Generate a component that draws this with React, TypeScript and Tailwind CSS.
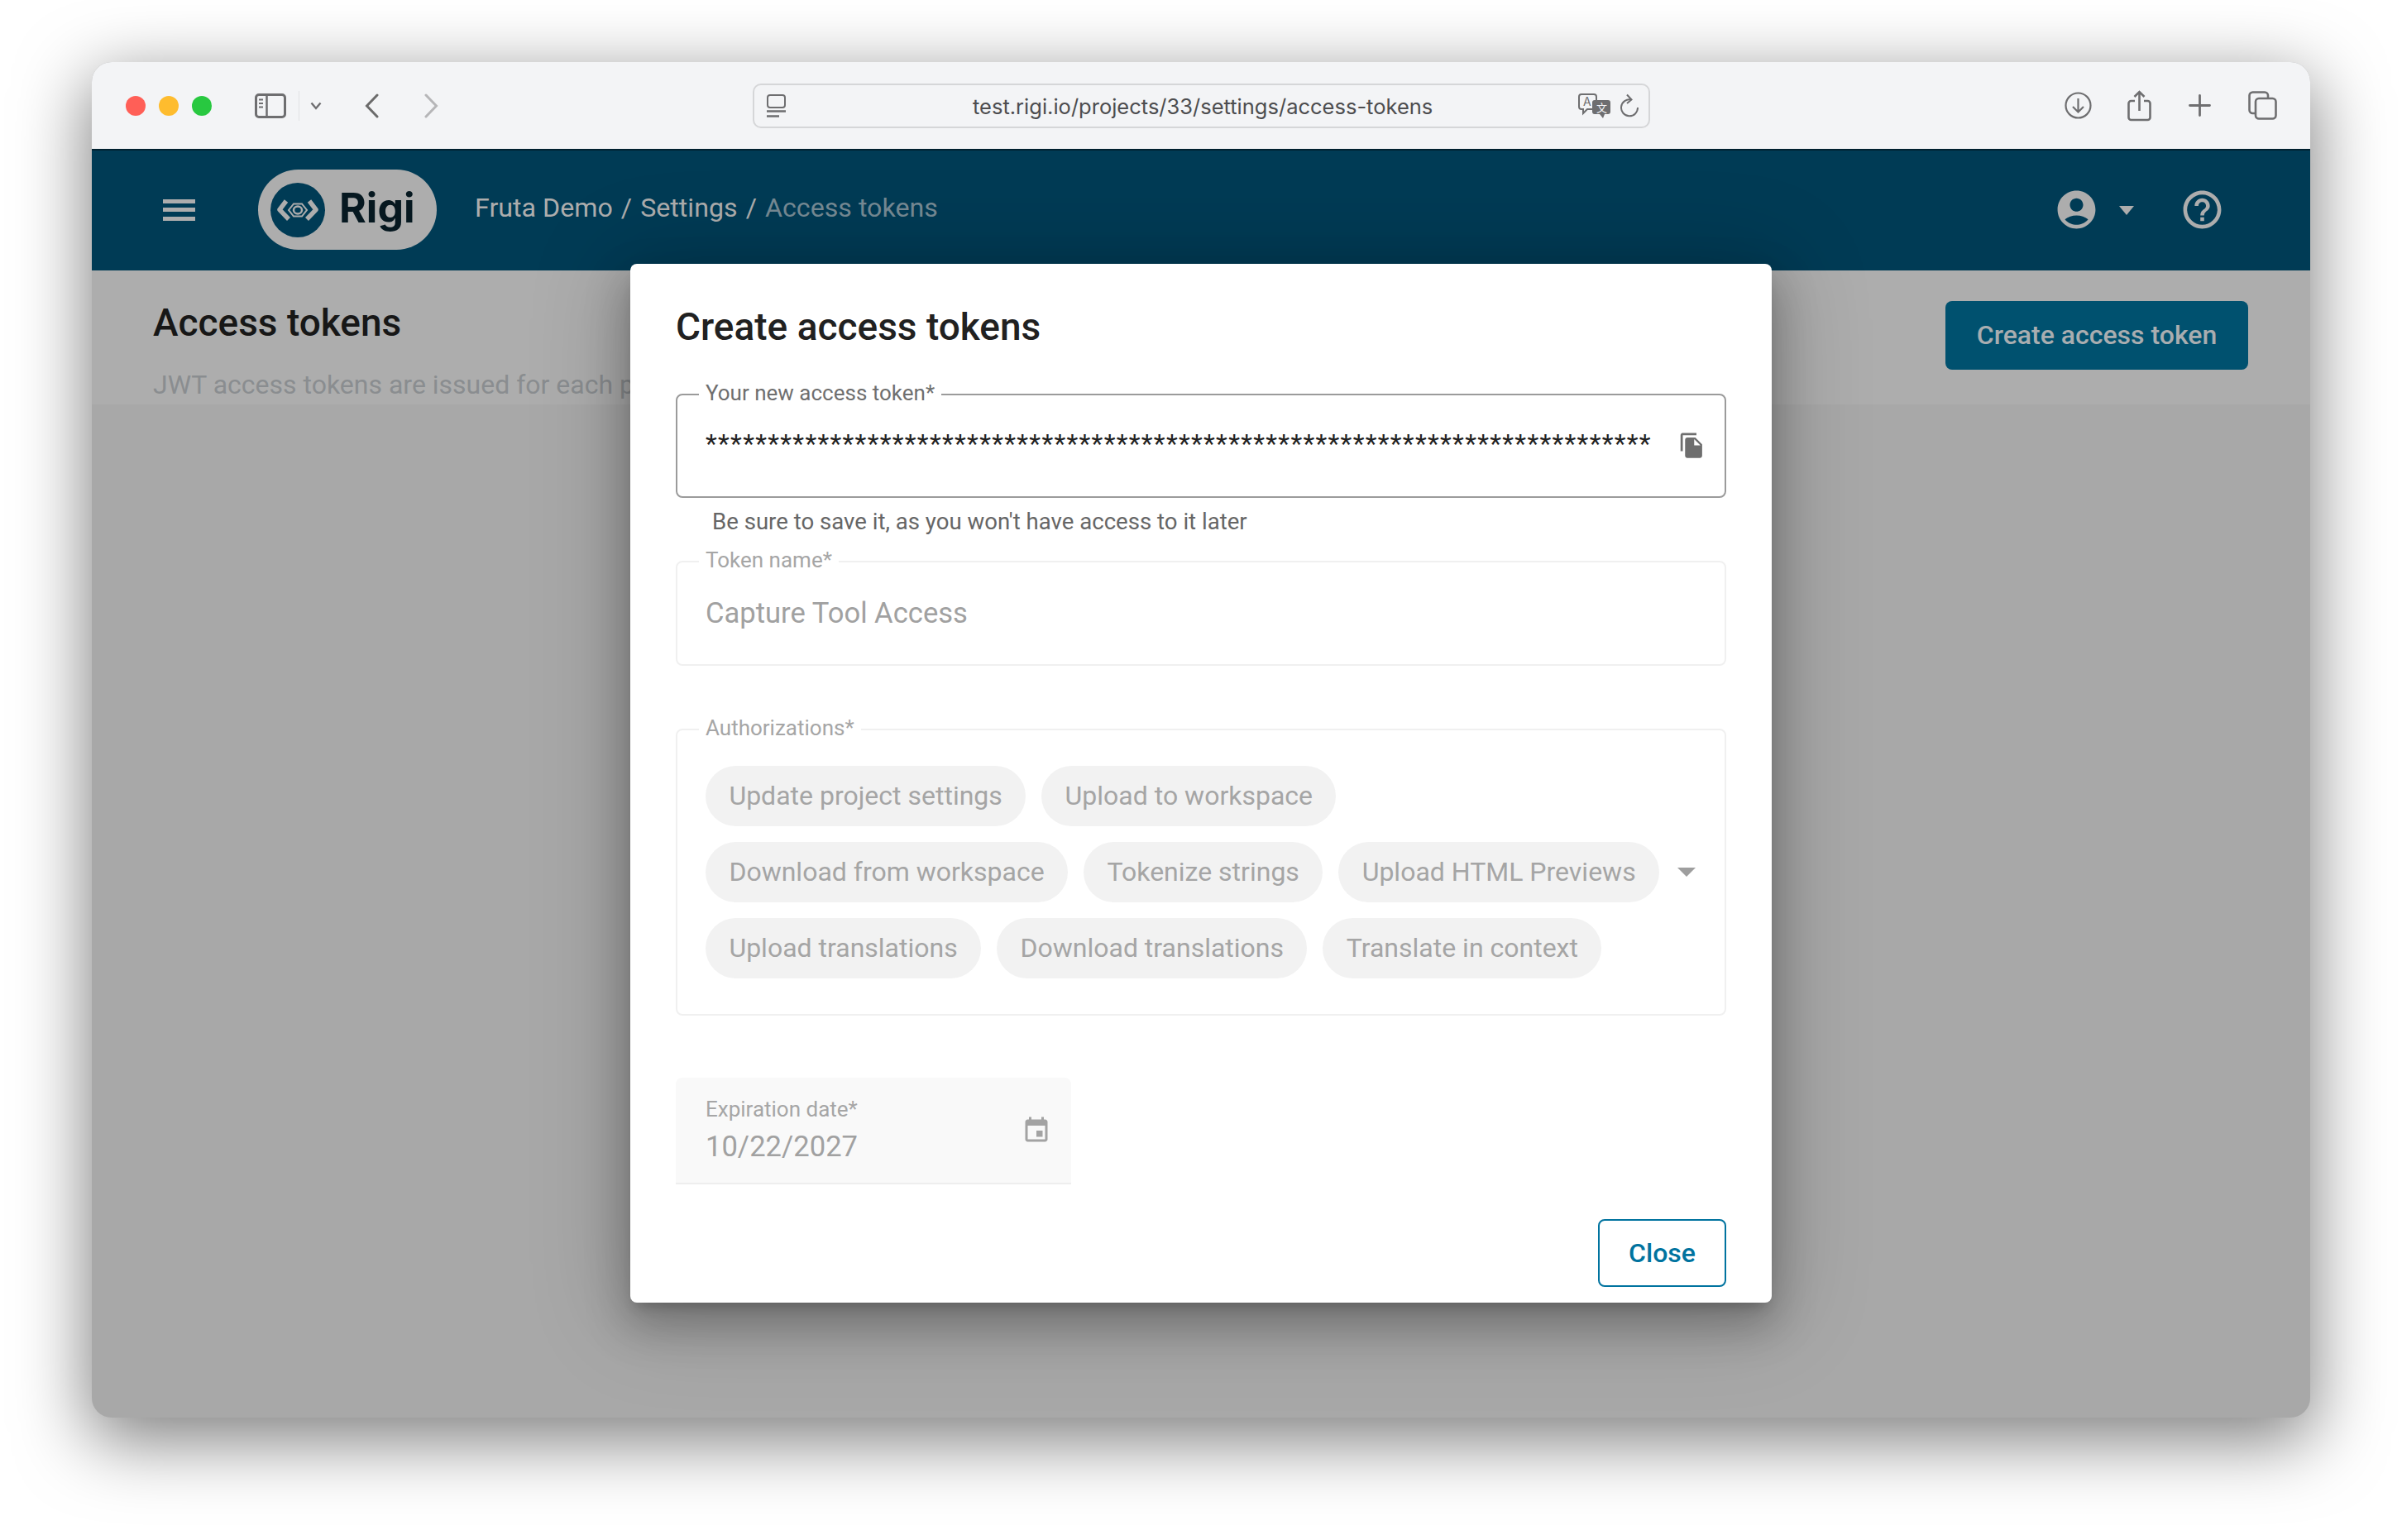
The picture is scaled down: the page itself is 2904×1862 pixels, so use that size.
const roboto = "font-['Roboto',sans-serif]";

function TrafficLight({ color }: { color: string }) {
  return <span className={`h-[24px] w-[24px] rounded-full ${color}`} />;
}

function RigiLogo() {
  return (
    <div className="ml-[76px] flex h-[97px] w-[216px] items-center rounded-full bg-[#adadad] pl-[15px]">
      <svg width="66" height="66" viewBox="0 0 66 66" fill="none">
        <circle cx="33" cy="33" r="33" fill="#003b55" />
        <path d="M19 22L11 32.5L22 44" stroke="#adadad" strokeWidth="5.5" strokeLinejoin="round" />
        <path d="M47 22L55 32.5L44 44" stroke="#adadad" strokeWidth="5.5" strokeLinejoin="round" />
        <path d="M22 33L28 25.5H38L44 33L38 40.5H28Z" stroke="#adadad" strokeWidth="2" />
        <ellipse cx="33" cy="33" rx="5" ry="4.5" stroke="#adadad" strokeWidth="2.5" />
      </svg>
      <span className="mb-[6px] ml-[17px] font-['Inter',sans-serif] text-[50px] leading-[56px] font-bold text-[#061820]">Rigi</span>
    </div>
  );
}

function Toolbar() {
  return (
    <div className="flex h-[105px] items-center bg-[#f3f4f6] pl-[41px]">
      <div className="flex gap-[16px]">
        <TrafficLight color="bg-[#ff5f57]" />
        <TrafficLight color="bg-[#febc2e]" />
        <TrafficLight color="bg-[#28c840]" />
      </div>
      <svg className="ml-[52px]" width="38" height="30" viewBox="0 0 38 30" fill="none" stroke="#6e6e70">
        <rect x="1.5" y="1.5" width="35" height="27" rx="3.5" strokeWidth="3" />
        <path d="M14.5 2V28" strokeWidth="2.5" />
        <path d="M5 7.5H10M5 12H10M5 16.5H10" strokeWidth="2" />
      </svg>
      <span className="ml-[15px] h-[36px] w-[1px] bg-[#e1e2e4]" />
      <svg className="ml-[13px]" width="14" height="10" viewBox="0 0 14 10" fill="none" stroke="#6e6e70" strokeWidth="2.4">
        <path d="M1.5 1.5L7 8L12.5 1.5" />
      </svg>
      <svg className="ml-[52px]" width="17" height="30" viewBox="0 0 17 30" fill="none" stroke="#6b6b6b" strokeWidth="3" strokeLinecap="round">
        <path d="M15 2L2.5 15L15 28" />
      </svg>
      <svg className="ml-[55px]" width="17" height="30" viewBox="0 0 17 30" fill="none" stroke="#b6b6b8" strokeWidth="3" strokeLinecap="round">
        <path d="M2 2L14.5 15L2 28" />
      </svg>

      <div className="ml-[380px] flex h-[54px] w-[1085px] items-center rounded-[10px] border-2 border-[#d5d6d8] pr-[11px] pl-[15px]">
        <svg width="24" height="28" viewBox="0 0 24 28" fill="none" stroke="#6e6e70">
          <rect x="1" y="1" width="21" height="15" rx="3" strokeWidth="2" />
          <path d="M0 20.5H23M0 26.5H15" strokeWidth="2.5" />
        </svg>
        <span className="mt-[2px] ml-[225px] font-['Inter',sans-serif] text-[25.5px] leading-[34px] text-[#4d4d4f]">test.rigi.io/projects/33/settings/access-tokens</span>
        <svg className="ml-auto" width="40" height="30" viewBox="0 0 40 30" fill="none">
          <path d="M4 1H19a3 3 0 0 1 3 3V16a3 3 0 0 1-3 3H11L6 24V19H4a3 3 0 0 1-3-3V4a3 3 0 0 1 3-3Z" stroke="#6e6e70" strokeWidth="2" />
          <text x="6" y="15" fontSize="14" fontFamily="Inter, sans-serif" fill="#6e6e70">A</text>
          <path d="M20 8H36a3 3 0 0 1 3 3V22a3 3 0 0 1-3 3H32L30 30L26 25H20a3 3 0 0 1-3-3V11a3 3 0 0 1 3-3Z" fill="#6e6e70" />
          <text x="22" y="22" fontSize="13" fontFamily="'Noto Sans CJK SC', sans-serif" fill="#f3f4f6">文</text>
        </svg>
        <svg className="ml-[11px]" width="23" height="30" viewBox="0 0 23 30" fill="none" stroke="#6e6e70" strokeWidth="2">
          <path d="M13 7.5A10 10 0 1 0 21 17" />
          <path d="M8 1.5L13.5 7.5L8 12" />
        </svg>
      </div>

      <svg className="ml-[501px]" width="33" height="33" viewBox="0 0 33 33" fill="none" stroke="#6e6e70" strokeWidth="2.2">
        <circle cx="16.5" cy="16.5" r="15" />
        <path d="M16.5 8V24M10 18L16.5 24.5L23 18" />
      </svg>
      <svg className="ml-[43px]" width="29" height="38" viewBox="0 0 29 38" fill="none" stroke="#6e6e70" strokeWidth="2.6">
        <path d="M9 13H4.5a3 3 0 0 0-3 3V33a3 3 0 0 0 3 3H24.500a3 3 0 0 0 3-3V16a3 3 0 0 0-3-3H20" />
        <path d="M14.500 25V2M8.500 8L14.500 2L20.500 8" />
      </svg>
      <svg className="ml-[45px]" width="27" height="27" viewBox="0 0 27 27" fill="none" stroke="#6e6e70" strokeWidth="2.8" strokeLinecap="round">
        <path d="M13.500 1.500V25.500M1.500 13.500H25.500" />
      </svg>
      <svg className="ml-[45px]" width="35" height="35" viewBox="0 0 35 35" fill="none" stroke="#6e6e70" strokeWidth="2.6">
        <path d="M8 27H5.500a4 4 0 0 1-4-4V5.500a4 4 0 0 1 4-4H20a4 4 0 0 1 4 4V8" />
        <rect x="9" y="9" width="24.500" height="24.500" rx="4" />
      </svg>
    </div>
  );
}

function AppHeader() {
  return (
    <header className={`flex h-[147px] items-center border-t-2 border-[#00202f] bg-[#003b55] pb-[2px] pl-[86px] ${roboto}`}>
      <div className="flex w-[39px] flex-col gap-[5.5px]">
        <span className="h-[5px] bg-[#adadad]" />
        <span className="h-[5px] bg-[#adadad]" />
        <span className="h-[5px] bg-[#adadad]" />
      </div>
      <RigiLogo />
      <nav className="mb-[6px] ml-[46px] flex items-center text-[32.2px] leading-[44px] text-[#adadad]">
        <span>Fruta Demo</span>
        <span className="mx-[10px]">/</span>
        <span>Settings</span>
        <span className="mx-[10px]">/</span>
        <span className="text-[#768a94]">Access tokens</span>
      </nav>
      <div className="ml-auto flex items-center pr-[103px]">
        <svg width="55" height="55" viewBox="0 0 24 24" fill="#adadad">
          <path d="M12 2C6.48 2 2 6.48 2 12s4.48 10 10 10 10-4.48 10-10S17.52 2 12 2zm0 4c1.930 0 3.500 1.570 3.500 3.500S13.930 13 12 13s-3.500-1.570-3.500-3.500S10.070 6 12 6zm0 14c-2.030 0-4.430-.82-6.140-2.880C7.550 15.800 9.680 15 12 15s4.450.8 6.140 2.120C16.430 19.180 14.030 20 12 20z" />
        </svg>
        <span className="mt-[2px] ml-[24px] h-0 w-0 border-x-[9px] border-t-[11px] border-x-transparent border-t-[#adadad]" />
        <svg className="ml-[55px]" width="55" height="55" viewBox="0 0 24 24" fill="#adadad">
          <path d="M11 18h2v-2h-2v2zm1-16C6.480 2 2 6.480 2 12s4.480 10 10 10 10-4.480 10-10S17.520 2 12 2zm0 18c-4.410 0-8-3.590-8-8s3.590-8 8-8 8 3.590 8 8-3.590 8-8 8zm0-14c-2.210 0-4 1.790-4 4h2c0-1.100.9-2 2-2s2 .9 2 2c0 2-3 1.750-3 5h2c0-2.250 3-2.500 3-5 0-2.210-1.790-4-4-4z" />
        </svg>
      </div>
    </header>
  );
}

function PageTop() {
  return (
    <section className={`flex h-[162px] justify-between bg-[#adadad] pr-[75px] pl-[74px] ${roboto}`}>
      <div className="w-[577px] pt-[42px]">
        <h1 className="text-[46px] leading-[42px] font-medium text-[#171717]">Access tokens</h1>
        {/* the dialog covers the rest of this line */}
        <p className="mt-[34px] overflow-hidden text-[32px] leading-[40px] whitespace-nowrap text-[#8a8d90]">
          JWT access tokens are issued for each project
        </p>
      </div>
      <button className="mt-[37px] h-[83px] w-[366px] rounded-[8px] bg-[#00516f] pb-[2px] text-[32px] font-medium text-[#a9adb0]">
        Create access token
      </button>
    </section>
  );
}

const chips = [
  'Update project settings',
  'Upload to workspace',
  'Download from workspace',
  'Tokenize strings',
  'Upload HTML Previews',
  'Upload translations',
  'Download translations',
  'Translate in context',
];

function Legend({ text, muted }: { text: string; muted?: boolean }) {
  return (
    <legend className={`ml-[26px] px-[8px] text-[26px] leading-[30px] ${muted ? 'text-[#a6a6a6]' : 'text-[#6f6f6f]'}`}>
      <span className="relative -top-[2px]">{text}</span>
    </legend>
  );
}

function CreateTokenDialog() {
  return (
    <div
      className={`absolute top-[244px] left-[651px] h-[1256px] w-[1380px] rounded-[8px] bg-white px-[55px] pt-[49px] shadow-[0_11px_15px_-7px_rgba(0,0,0,0.2),0_24px_50px_6px_rgba(0,0,0,0.22),0_9px_110px_16px_rgba(0,0,0,0.18)] ${roboto}`}
    >
      <h2 className="text-[46px] leading-[54px] font-medium text-[#212121]">Create access tokens</h2>

      <fieldset className="mt-[40px] rounded-[8px] border-2 border-[#9b9b9b]">
        <Legend text="Your new access token*" />
        <div className="flex h-[108px] items-start justify-between pr-[23px] pl-[34px]">
          <span className="mt-[22px] text-[32px] leading-[44px] tracking-[1.27px] text-[#212121]">
            ****************************************************************************
          </span>
          <svg className="mt-[30px]" width="33" height="33" viewBox="0 0 24 24" fill="#6e6e6e">
            <path d="M16 1H4c-1.100 0-2 .9-2 2v14h2V3h12V1zm-1 4 6 6v10c0 1.100-.9 2-2 2H7.990C6.890 23 6 22.100 6 21l.01-14c0-1.100.89-2 1.990-2h7zm-1 7h5.500L14 6.500V12z" />
          </svg>
        </div>
      </fieldset>
      <p className="mt-[11px] pl-[44px] text-[27.6px] leading-[36px] text-[#666666]">
        Be sure to save it, as you won't have access to it later
      </p>

      <fieldset className="mt-[15px] rounded-[8px] border-2 border-[#f0f0f0]">
        <Legend text="Token name*" muted />
        <div className="h-[109px] pt-[25px] pl-[34px] text-[34.6px] leading-[44px] text-[#a1a1a1]">Capture Tool Access</div>
      </fieldset>

      <fieldset className="mt-[62px] rounded-[8px] border-2 border-[#f0f0f0]">
        <Legend text="Authorizations*" muted />
        <div className="flex items-center pt-[29px] pb-[43px] pl-[34px]">
          <div className="flex w-[1161px] flex-wrap gap-x-[19px] gap-y-[19px]">
            {chips.map((chip) => (
              <span
                key={chip}
                className="flex h-[73px] items-center rounded-full bg-[#f2f2f2] px-[28.4px] pb-[1px] text-[32px] text-[#a5a5a5]"
              >
                {chip}
              </span>
            ))}
          </div>
          <span className="ml-[14px] h-0 w-0 border-x-[11px] border-t-[11px] border-x-transparent border-t-[#9e9e9e]" />
        </div>
      </fieldset>

      <div className="mt-[75px] flex h-[129px] w-[478px] items-center justify-between rounded-t-[8px] border-b-2 border-[#eeeeee] bg-[#f9f9f9] pr-[24px] pl-[36px]">
        <div>
          <div className="text-[26px] leading-[32px] text-[#a6a6a6]">Expiration date*</div>
          <div className="mt-[7px] text-[34.6px] leading-[44px] text-[#a1a1a1]">10/22/2027</div>
        </div>
        <svg width="36" height="36" viewBox="0 0 24 24" fill="#a3a3a3">
          <path d="M17 12h-5v5h5v-5zM16 1v2H8V1H6v2H5c-1.110 0-1.990.9-1.990 2L3 19c0 1.100.89 2 2 2h14c1.100 0 2-.9 2-2V5c0-1.100-.9-2-2-2h-1V1h-2zm3 18H5V8h14v11z" />
        </svg>
      </div>

      <div className="mt-[42px] flex justify-end">
        <button className="h-[82px] w-[155px] rounded-[8px] border-2 border-[#00739f] text-[32px] font-medium text-[#00739f]">
          Close
        </button>
      </div>
    </div>
  );
}

export default function App() {
  return (
    <div className="h-[1862px] w-[2904px] bg-white pt-[75px] pl-[111px]">
      <div className="relative h-[1639px] w-[2682px] overflow-hidden rounded-[24px] bg-[#a8a8a8] shadow-[0_24px_85px_4px_rgba(0,0,0,0.5)]">
        <Toolbar />
        <AppHeader />
        <PageTop />
        <CreateTokenDialog />
      </div>
    </div>
  );
}
